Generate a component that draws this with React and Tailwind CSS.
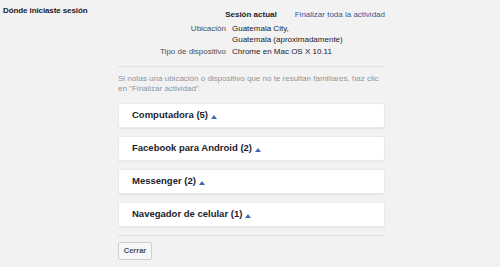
import React from 'react';

const devices = [
  'Computadora (5)',
  'Facebook para Android (2)',
  'Messenger (2)',
  'Navegador de celular (1)',
];

const Arrow = () => (
  <svg width="6" height="4" viewBox="0 0 6 4" className="ml-[3px] mt-[3px]">
    <polygon points="3,0 6,4 0,4" fill="#4267b2" />
  </svg>
);

const App = () => {
  return (
    <div className="w-[500px] h-[267px] bg-[#f2f2f2] flex font-['Liberation_Sans',Arial,sans-serif] text-[#1d2129] overflow-hidden">
      <div className="w-[118px] shrink-0 pl-[3px] pt-[5px]">
        <h2 className="text-[8px] leading-[11px] font-bold tracking-[-0.1px]">Dónde iniciaste sesión</h2>
      </div>

      <div className="w-[267px] shrink-0">
        <div className="flex justify-end gap-[18px] pt-[9px] text-[8px] leading-[11px]">
          <span className="font-bold">Sesión actual</span>
          <a className="text-[#365899]">Finalizar toda la actividad</a>
        </div>

        <div className="grid grid-cols-[108px_1fr] gap-x-[6px] text-[8px] leading-[11px] mt-[3px]">
          <span className="text-right text-[#4b4f56]">Ubicación</span>
          <span>Guatemala City,<br />Guatemala (aproximadamente)</span>
          <span className="text-right text-[#4b4f56] mt-[1px]">Tipo de dispositivo</span>
          <span className="mt-[1px]">Chrome en Mac OS X 10.11</span>
        </div>

        <div className="border-t border-[#dddfe2] mt-[9px] pt-[7px]">
          <p className="text-[8px] leading-[10px] text-[#90949c]">
            Si notas una ubicación o dispositivo que no te resultan familiares, haz clic en "Finalizar actividad".
          </p>
        </div>

        <div className="flex flex-col gap-[8px] mt-[9px]">
          {devices.map((d) => (
            <div
              key={d}
              className="h-[25px] bg-white rounded-[2px] border border-[#e9eaed] shadow-[0_1px_1px_rgba(0,0,0,0.06)] flex items-center pl-[13px]"
            >
              <span className="text-[9.5px] font-bold text-[#1d2129]">{d}</span>
              <Arrow />
            </div>
          ))}
        </div>

        <div className="flex border-t border-[#dddfe2] mt-[8px] pt-[6px]">
          <button className="h-[18px] w-[34px] bg-[#f6f7f9] border border-[#ced0d4] rounded-[2px] text-[7.5px] leading-none font-bold text-[#4b4f56]">
            Cerrar
          </button>
        </div>
      </div>
    </div>
  );
};

export default App;
